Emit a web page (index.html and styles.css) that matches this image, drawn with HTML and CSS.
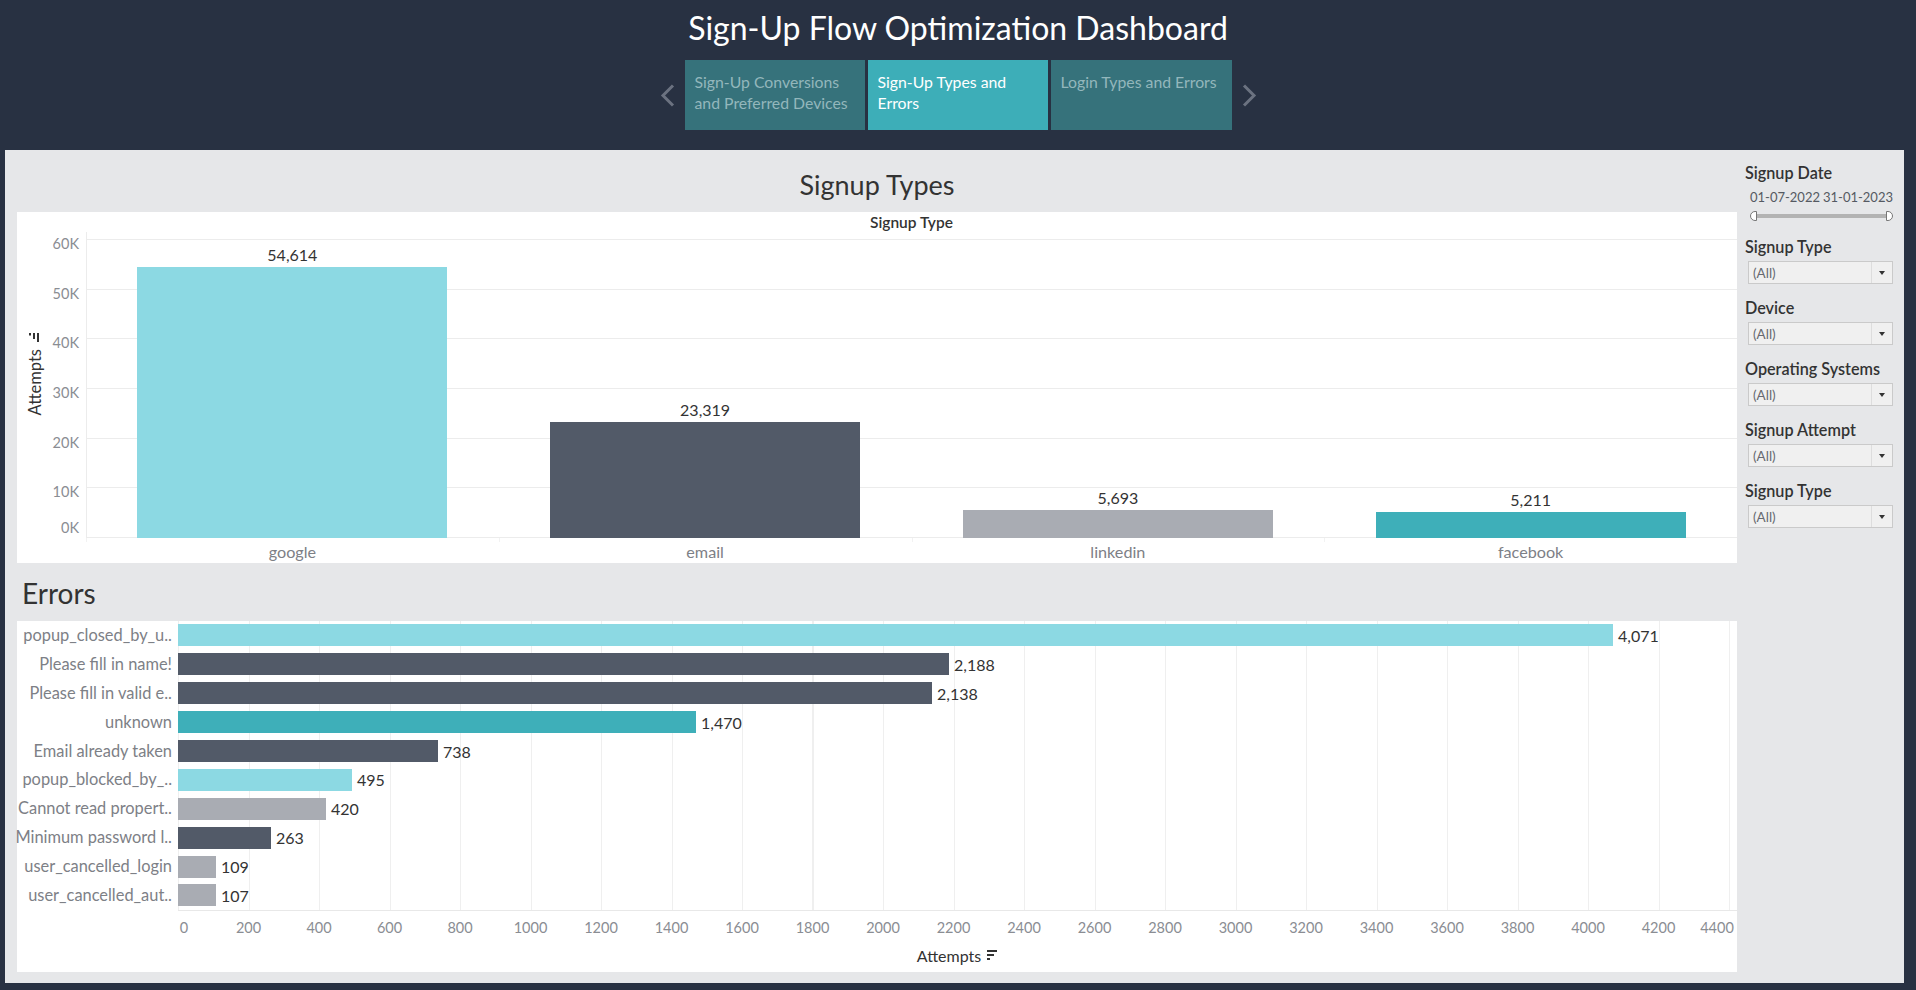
FILE: index.html
```html
<!DOCTYPE html>
<html lang="en">
<head>
<meta charset="utf-8">
<title>Sign-Up Flow Optimization Dashboard</title>
<link rel="stylesheet" href="styles.css">
</head>
<body>
<header class="top">
  <h1 class="title">Sign-Up Flow Optimization Dashboard</h1>
  <nav class="tabs">
    <span class="arrow arrow-left"><svg width="15" height="23" viewBox="0 0 15 23"><path d="M13 1.5 L3 11.5 L13 21.5" fill="none" stroke="#6b7280" stroke-width="3"/></svg></span>
    <div class="tab">Sign-Up Conversions<br>and Preferred Devices</div>
    <div class="tab active">Sign-Up Types and<br>Errors</div>
    <div class="tab">Login Types and Errors</div>
    <span class="arrow arrow-right"><svg width="15" height="23" viewBox="0 0 15 23"><path d="M2 1.5 L12 11.5 L2 21.5" fill="none" stroke="#6b7280" stroke-width="3"/></svg></span>
  </nav>
</header>

<main class="panel">
  <section class="content">
    <h2 class="sec-title sec-types">Signup Types</h2>
    <div class="card card-types">
      <div class="chart-head">Signup Type</div>
      <div class="yaxis">
        <div class="ytitle"><span>Attempts</span><svg class="ysort" width="11" height="10" viewBox="0 0 11 10"><rect x="0" y="0" width="2" height="2.5" fill="#333"/><rect x="4" y="0" width="2" height="6" fill="#333"/><rect x="8" y="0" width="2" height="9" fill="#333"/></svg></div>
        <div class="yticks">
          <span>60K</span><span>50K</span><span>40K</span><span>30K</span><span>20K</span><span>10K</span><span class="zero">0K</span>
        </div>
      </div>
      <div class="vplot">
        <div class="vcol"><span class="val">54,614</span><div class="vbar c-light" style="height:271px"></div></div>
        <div class="vcol"><span class="val">23,319</span><div class="vbar c-dark" style="height:116px"></div></div>
        <div class="vcol"><span class="val">5,693</span><div class="vbar c-gray" style="height:28px"></div></div>
        <div class="vcol"><span class="val">5,211</span><div class="vbar c-teal" style="height:26px"></div></div>
      </div>
      <div class="xcats"><span>google</span><span>email</span><span>linkedin</span><span>facebook</span></div>
    </div>

    <h2 class="sec-title sec-errors">Errors</h2>
    <div class="card card-errors">
      <div class="hchart">
        <div class="hlabels">
          <span>popup_closed_by_u..</span>
          <span>Please fill in name!</span>
          <span>Please fill in valid e..</span>
          <span>unknown</span>
          <span>Email already taken</span>
          <span>popup_blocked_by_..</span>
          <span>Cannot read propert..</span>
          <span>Minimum password l..</span>
          <span>user_cancelled_login</span>
          <span>user_cancelled_aut..</span>
        </div>
        <div class="hplot">
          <div class="hrow"><div class="hbar c-light" style="width:1435px"></div><span class="hval">4,071</span></div>
          <div class="hrow"><div class="hbar c-dark" style="width:771px"></div><span class="hval">2,188</span></div>
          <div class="hrow"><div class="hbar c-dark" style="width:754px"></div><span class="hval">2,138</span></div>
          <div class="hrow"><div class="hbar c-teal" style="width:518px"></div><span class="hval">1,470</span></div>
          <div class="hrow"><div class="hbar c-dark" style="width:260px"></div><span class="hval">738</span></div>
          <div class="hrow"><div class="hbar c-light" style="width:174px"></div><span class="hval">495</span></div>
          <div class="hrow"><div class="hbar c-gray" style="width:148px"></div><span class="hval">420</span></div>
          <div class="hrow"><div class="hbar c-dark" style="width:93px"></div><span class="hval">263</span></div>
          <div class="hrow"><div class="hbar c-gray" style="width:38px"></div><span class="hval">109</span></div>
          <div class="hrow"><div class="hbar c-gray" style="width:38px"></div><span class="hval">107</span></div>
        </div>
      </div>
      <div class="xticks">
        <span class="first">0</span><span>200</span><span>400</span><span>600</span><span>800</span><span>1000</span><span>1200</span><span>1400</span><span>1600</span><span>1800</span><span>2000</span><span>2200</span><span>2400</span><span>2600</span><span>2800</span><span>3000</span><span>3200</span><span>3400</span><span>3600</span><span>3800</span><span>4000</span><span>4200</span><span class="last">4400</span>
      </div>
      <div class="xtitle"><span>Attempts</span><svg width="11" height="10" viewBox="0 0 11 10"><rect x="0" y="0" width="10" height="2" fill="#333"/><rect x="0" y="4" width="7" height="2" fill="#333"/><rect x="0" y="8" width="3" height="2" fill="#333"/></svg></div>
    </div>
  </section>

  <aside class="filters">
    <div class="flabel">Signup Date</div>
    <div class="dates"><span>01-07-2022</span><span>31-01-2023</span></div>
    <div class="slider"><span class="handle handle-l"></span><span class="track"></span><span class="handle handle-r"></span></div>

    <div class="fgroup first-group">
      <div class="flabel">Signup Type</div>
      <div class="dropdown"><span class="dv">(All)</span><span class="caret"><i></i></span></div>
    </div>
    <div class="fgroup">
      <div class="flabel">Device</div>
      <div class="dropdown"><span class="dv">(All)</span><span class="caret"><i></i></span></div>
    </div>
    <div class="fgroup">
      <div class="flabel">Operating Systems</div>
      <div class="dropdown"><span class="dv">(All)</span><span class="caret"><i></i></span></div>
    </div>
    <div class="fgroup">
      <div class="flabel">Signup Attempt</div>
      <div class="dropdown"><span class="dv">(All)</span><span class="caret"><i></i></span></div>
    </div>
    <div class="fgroup">
      <div class="flabel">Signup Type</div>
      <div class="dropdown"><span class="dv">(All)</span><span class="caret"><i></i></span></div>
    </div>
  </aside>
</main>
</body>
</html>
```

FILE: styles.css
```css
html, body {
  margin: 0;
  padding: 0;
}
body {
  width: 1916px;
  height: 990px;
  overflow: hidden;
  background: #283142;
  font-family: Lato, "Noto Sans", "DejaVu Sans", sans-serif;
}

/* header */
.top {
  height: 150px;
  display: flex;
  flex-direction: column;
  align-items: center;
}
.title {
  margin: 8px 0 0;
  height: 40px;
  line-height: 40px;
  font-size: 32px;
  font-weight: 400;
  color: #ffffff;
}
.tabs {
  margin-top: 12px;
  height: 70px;
  display: flex;
  align-items: center;
}
.arrow {
  display: flex;
  width: 15px;
  height: 23px;
}
.arrow-left { margin-right: 10px; }
.arrow-right { margin-left: 10px; }
.tab {
  width: 180px;
  height: 70px;
  box-sizing: border-box;
  padding: 11px 8px 0 10px;
  margin-right: 3px;
  background: #36727b;
  color: #93b7bc;
  font-size: 15.8px;
  line-height: 21px;
  white-space: nowrap;
}
.tab:nth-of-type(3) { margin-right: 0; width: 181px; }
.tab.active {
  background: #3daeb8;
  color: #ffffff;
}

/* main panel */
.panel {
  margin: 0 12px 0 5px;
  height: 833px;
  background: #e6e7e9;
  display: flex;
}
.content {
  width: 1720px;
  margin-left: 12px;
  display: flex;
  flex-direction: column;
}
.sec-title {
  margin: 0;
  font-weight: 400;
  color: #333333;
  line-height: 30px;
  box-sizing: border-box;
}
.sec-types {
  height: 62px;
  padding-top: 20px;
  text-align: center;
  font-size: 27px;
}
.sec-errors {
  height: 58px;
  padding: 15px 0 0 5px;
  font-size: 28px;
}
.card {
  background: #ffffff;
  height: 351px;
}

/* vertical bar chart */
.card-types {
  display: grid;
  grid-template-columns: 69px 1651px;
  grid-template-rows: 20px 306px 25px;
}
.chart-head {
  grid-column: 2;
  grid-row: 1;
  text-align: center;
  font-size: 15.5px;
  font-weight: 600;
  line-height: 20px;
  color: #333333;
}
.yaxis {
  grid-column: 1;
  grid-row: 2;
  display: flex;
}
.ytitle {
  width: 36px;
  display: flex;
  flex-direction: column-reverse;
  align-items: center;
  justify-content: center;
  gap: 6px;
  padding-bottom: 22px;
  box-sizing: border-box;
}
.ytitle span {
  writing-mode: vertical-rl;
  transform: rotate(180deg);
  font-size: 16.5px;
  color: #333333;
  line-height: 18px;
}
.yticks {
  flex: 1;
  display: flex;
  flex-direction: column;
  align-items: flex-end;
  padding: 4px 7px 0 0;
}
.yticks span {
  flex: none;
  height: 49.667px;
  line-height: 16px;
  font-size: 14.5px;
  color: #8a8d93;
}
.yticks .zero { margin-top: -14px; }
.vplot {
  grid-column: 2;
  grid-row: 2;
  display: flex;
  align-items: flex-end;
  background:
    linear-gradient(to right, #ececec 0, #ececec 1px, transparent 1px),
    repeating-linear-gradient(to top, #ececec 0, #ececec 1px, transparent 1px, transparent 49.667px);
}
.vcol {
  flex: 1;
  height: 100%;
  display: flex;
  flex-direction: column;
  align-items: center;
  justify-content: flex-end;
}
.val {
  font-size: 16px;
  line-height: 18px;
  color: #333333;
  margin-bottom: 3px;
}
.vbar { width: 310px; }
.xcats {
  grid-column: 2;
  grid-row: 3;
  display: flex;
  background: repeating-linear-gradient(to right, #f2f2f2 0, #f2f2f2 1px, transparent 1px, transparent 412.75px) top left / 100% 4px no-repeat;
}
.xcats span {
  flex: 1;
  text-align: center;
  font-size: 16.2px;
  line-height: 27px;
  color: #7d8086;
}

.c-light { background: #8cd9e3; }
.c-dark { background: #525a68; }
.c-gray { background: #a9acb3; }
.c-teal { background: #3eafb9; }

/* horizontal bar chart */
.card-errors {
  display: flex;
  flex-direction: column;
}
.hchart {
  display: flex;
  height: 290px;
}
.hlabels {
  width: 161px;
  box-sizing: border-box;
  padding-right: 6px;
  display: flex;
  flex-direction: column;
  align-items: flex-end;
}
.hlabels span {
  flex: none;
  height: 28.9px;
  line-height: 28px;
  font-size: 16.4px;
  color: #7d8086;
  white-space: nowrap;
}
.hplot {
  flex: 1;
  box-sizing: border-box;
  border-bottom: 1px solid #e8e8e8;
  display: flex;
  flex-direction: column;
  background: repeating-linear-gradient(to right, #efefef 0, #efefef 1px, transparent 1px, transparent 70.5px);
}
.hrow {
  flex: none;
  height: 28.9px;
  display: flex;
  align-items: center;
}
.hbar { height: 22px; }
.hval {
  margin-left: 5px;
  font-size: 16px;
  color: #333333;
}
.xticks {
  display: flex;
  margin-left: 125.75px;
  height: 34px;
}
.xticks span {
  flex: none;
  width: 70.5px;
  box-sizing: border-box;
  text-align: center;
  line-height: 34px;
  font-size: 14.5px;
  color: #8a8d93;
}
.xticks .first { padding-left: 12px; }
.xticks .last { padding-right: 24px; }
.xtitle {
  padding-left: 161px;
  height: 20px;
  display: flex;
  justify-content: center;
  align-items: center;
  gap: 6px;
  font-size: 16px;
  color: #333333;
}

/* filters */
.filters {
  flex: 1;
  padding: 14px 11px 0 8px;
}
.flabel {
  font-size: 16.2px;
  font-weight: 600;
  color: #333333;
  line-height: 18px;
  white-space: nowrap;
}
.dates {
  margin-top: 7px;
  padding-left: 5px;
  display: flex;
  justify-content: space-between;
  font-size: 13px;
  line-height: 16px;
  color: #555a62;
}
.slider {
  margin: 6px 0 0 5px;
  height: 10px;
  display: flex;
  align-items: center;
}
.track {
  flex: 1;
  height: 4px;
  background: #b3b3b3;
}
.handle {
  width: 7px;
  height: 10px;
  box-sizing: border-box;
  border: 1px solid #777;
  background: #ffffff;
}
.handle-l { border-radius: 5px 0 0 5px; }
.handle-r { border-radius: 0 5px 5px 0; }
.fgroup { margin-top: 15px; }
.first-group { margin-top: 17px; }
.dropdown {
  margin: 5px 0 0 3px;
  height: 23px;
  box-sizing: border-box;
  border: 1px solid #cacaca;
  background: #f0f0f0;
  display: flex;
  align-items: center;
}
.dv {
  flex: 1;
  padding-left: 4px;
  font-size: 13.5px;
  color: #666a70;
}
.caret {
  width: 20px;
  height: 100%;
  border-left: 1px solid #dddddd;
  display: flex;
  align-items: center;
  justify-content: center;
}
.caret i {
  width: 0;
  height: 0;
  border-left: 3.5px solid transparent;
  border-right: 3.5px solid transparent;
  border-top: 4px solid #333;
}
```
